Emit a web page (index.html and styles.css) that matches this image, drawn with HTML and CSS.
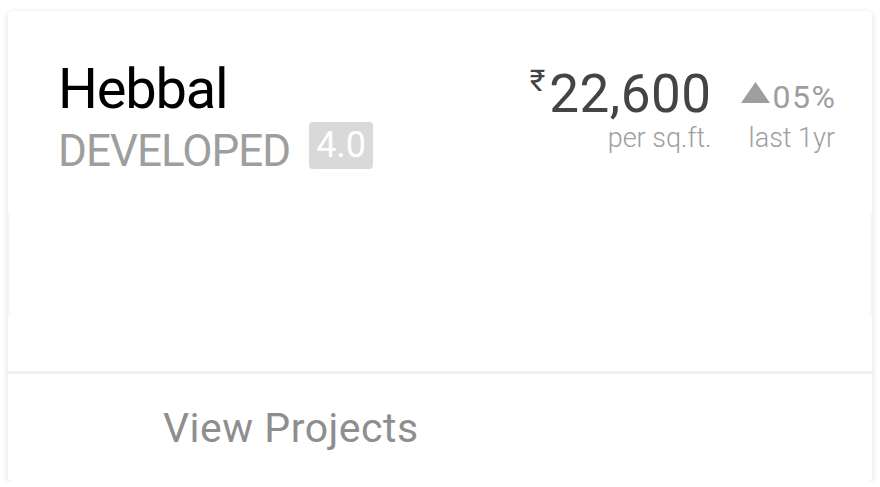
FILE: index.html
```html
<!DOCTYPE html>
<html>
<head>
<meta charset="utf-8">
<link rel="stylesheet" href="styles.css">
</head>
<body>
<div class="card">
  <div class="head">
    <div class="loc">
      <div class="name">Hebbal</div>
      <div class="sub">
        <span class="status">DEVELOPED</span>
        <span class="badge">4.0</span>
      </div>
    </div>
    <div class="stats">
      <div class="col">
        <div class="price"><span class="cur">₹</span><span class="amt">22,600</span></div>
        <div class="cap">per sq.ft.</div>
      </div>
      <div class="col">
        <div class="change"><svg class="tri" width="29" height="21" viewBox="0 0 29 21"><path d="M14.5 0 L29 21 L0 21 Z" fill="#9e9e9e"/></svg><span class="pct">05%</span></div>
        <div class="cap">last 1yr</div>
      </div>
    </div>
  </div>
  <div class="chart"></div>
  <div class="divider"></div>
  <div class="foot">
    <span class="btn">View Projects</span>
  </div>
</div>
</body>
</html>
```
FILE: styles.css
```css
html, body {
  margin: 0;
  padding: 0;
  background: #ffffff;
}
body {
  font-family: Roboto, "Noto Sans", "Liberation Sans", sans-serif;
  padding: 11px 8px 0 8px;
}
.card {
  width: 864px;
  height: 471px;
  background: #fff;
  border-radius: 5px;
  box-shadow: 0 1px 6px rgba(0, 0, 0, 0.13);
  display: flex;
  flex-direction: column;
}
.head {
  display: flex;
  justify-content: space-between;
  padding: 50px 37px 0 50px;
  height: 164px;
  box-sizing: border-box;
}
.name {
  font-size: 56px;
  line-height: 56px;
  letter-spacing: -1.2px;
  color: #000;
}
.sub {
  display: flex;
  align-items: flex-end;
  margin-top: 5px;
}
.status {
  font-size: 44px;
  line-height: 44px;
  letter-spacing: -1px;
  color: #9e9e9e;
}
.badge {
  margin-left: 19px;
  margin-bottom: 4px;
  background: #d9d9d9;
  color: #fff;
  border-radius: 4px;
  font-size: 36px;
  line-height: 47px;
  padding: 0 7px;
}
.stats {
  display: flex;
  gap: 29px;
  padding-top: 7px;
}
.col {
  display: flex;
  flex-direction: column;
  align-items: flex-end;
}
.price {
  display: flex;
  align-items: flex-start;
  color: #444;
}
.cur {
  font-size: 30px;
  line-height: 24px;
  margin-top: 1px;
  margin-right: 4px;
}
.amt {
  font-size: 53px;
  line-height: 52px;
  letter-spacing: 0.5px;
}
.change {
  display: flex;
  align-items: flex-end;
  height: 52px;
  color: #9e9e9e;
}
.tri {
  margin-bottom: 17px;
  margin-right: 3px;
}
.pct {
  font-size: 32px;
  line-height: 30px;
  letter-spacing: 1.5px;
  margin-right: -1.5px;
  margin-bottom: 8px;
}
.cap {
  font-size: 27px;
  font-weight: 300;
  line-height: 30px;
  color: #9e9e9e;
  margin-top: 3px;
}
.chart {
  margin-top: 38px;
  height: 104px;
  box-shadow: inset 3px 0 3px -2px rgba(0, 0, 0, 0.06), inset -3px 0 3px -2px rgba(0, 0, 0, 0.06);
}
.divider {
  margin: 54px -3px 0 -3px;
  height: 3px;
  background: #f0f0f0;
}
.foot {
  flex: 1;
  display: flex;
  align-items: center;
  padding-left: 155px;
}
.btn {
  font-size: 41px;
  letter-spacing: 0.5px;
  color: #8e8e8e;
  line-height: 40px;
}
```
